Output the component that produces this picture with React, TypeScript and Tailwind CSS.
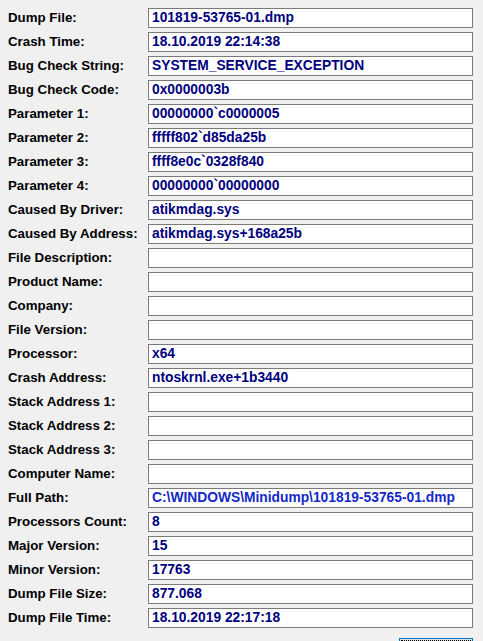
import React from "react";

const rows: [string, string][] = [
  ["Dump File:", "101819-53765-01.dmp"],
  ["Crash Time:", "18.10.2019 22:14:38"],
  ["Bug Check String:", "SYSTEM_SERVICE_EXCEPTION"],
  ["Bug Check Code:", "0x0000003b"],
  ["Parameter 1:", "00000000`c0000005"],
  ["Parameter 2:", "fffff802`d85da25b"],
  ["Parameter 3:", "ffff8e0c`0328f840"],
  ["Parameter 4:", "00000000`00000000"],
  ["Caused By Driver:", "atikmdag.sys"],
  ["Caused By Address:", "atikmdag.sys+168a25b"],
  ["File Description:", ""],
  ["Product Name:", ""],
  ["Company:", ""],
  ["File Version:", ""],
  ["Processor:", "x64"],
  ["Crash Address:", "ntoskrnl.exe+1b3440"],
  ["Stack Address 1:", ""],
  ["Stack Address 2:", ""],
  ["Stack Address 3:", ""],
  ["Computer Name:", ""],
  ["Full Path:", "C:\\WINDOWS\\Minidump\\101819-53765-01.dmp"],
  ["Processors Count:", "8"],
  ["Major Version:", "15"],
  ["Minor Version:", "17763"],
  ["Dump File Size:", "877.068"],
  ["Dump File Time:", "18.10.2019 22:17:18"],
];

export default function App() {
  return (
    <div
      className="w-[483px] h-[641px] overflow-hidden bg-[#f0f0f0] pt-[8px] pl-[8px] flex flex-col gap-[4px]"
      style={{ fontFamily: '"Liberation Sans", Arial, sans-serif' }}
    >
      {rows.map(([label, value]) => (
        <div key={label} className="flex items-center h-[20px]">
          <div className="w-[140px] text-[13.3px] font-bold text-black leading-[20px] whitespace-nowrap">
            {label}
          </div>
          <div
            className={
              "w-[325px] h-[20px] border border-[#7a7a7a] bg-white pl-[3px] text-[13.8px] font-bold leading-[18px] whitespace-nowrap overflow-hidden " +
              (label === "Full Path:" ? "text-[#1428c8]" : "text-[#000080]")
            }
          >
            {value}
          </div>
        </div>
      ))}
      <div className="flex justify-end pr-[10px] pt-[6px]">
        <div className="w-[74px] h-[23px] border border-[#0078d7] bg-[#e1e1e1] p-[1px]">
          <div className="w-full h-full border border-dotted border-black" />
        </div>
      </div>
    </div>
  );
}
